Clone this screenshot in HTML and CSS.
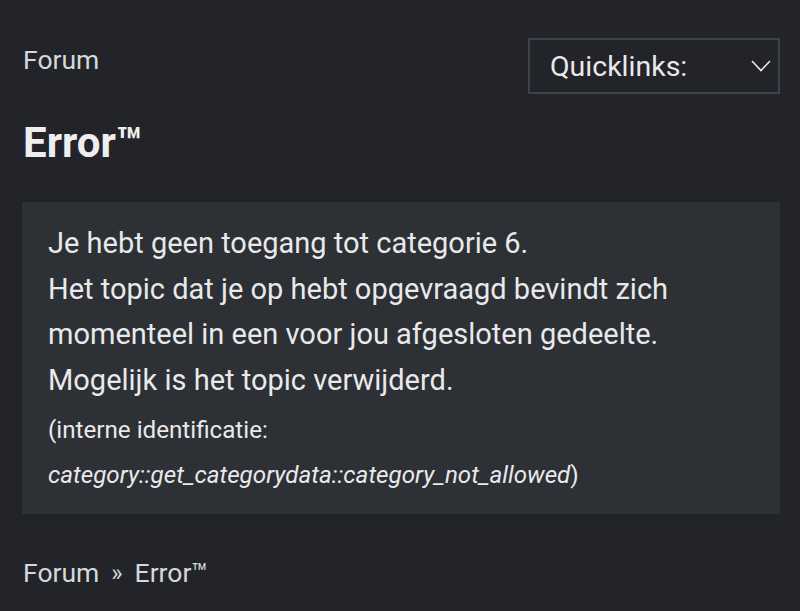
FILE: index.html
```html
<!DOCTYPE html>
<html lang="nl">
<head>
    <meta charset="UTF-8">
    <meta name="viewport" content="width=device-width, initial-scale=1.0">
    <title>Error™</title>
    <link rel="stylesheet" href="styles.css">
</head>
<body>
    <header class="kop">
        <a class="kop_link" href="#">Forum</a>
        <div class="quicklinks">
            <span>Quicklinks:</span>
            <svg class="pijl" width="20" height="12" viewBox="0 0 20 12"><path d="M1 1 L10 10.5 L19 1" fill="none" stroke="#e8e8ea" stroke-width="1.6"/></svg>
        </div>
    </header>

    <h1 class="titel">Error™</h1>

    <section class="melding">
        <p>Je hebt geen toegang tot categorie 6.</p>
        <p>Het topic dat je op hebt opgevraagd bevindt zich momenteel in een voor jou afgesloten gedeelte.</p>
        <p>Mogelijk is het topic verwijderd.</p>
        <p class="klein">(interne identificatie: <em>category::get_categorydata::category_not_allowed</em>)</p>
    </section>

    <nav class="kruimel">
        <a href="#">Forum</a>
        <span class="scheiding">»</span>
        <a href="#">Error™</a>
    </nav>
</body>
</html>
```

FILE: styles.css
```css
*{
    margin: 0;
    padding: 0;
    box-sizing: border-box;
}
body{
    width: 800px;
    height: 611px;
    background-color: rgb(34, 36, 41);
    color: rgb(233, 233, 235);
    font-family: Roboto, "Noto Sans", sans-serif;
    padding: 0 20px 0 22px;
    overflow: hidden;
}
a{
    color: inherit;
    text-decoration: none;
}
.kop{
    display: flex;
    justify-content: space-between;
    align-items: flex-start;
    padding-top: 38px;
}
.kop_link{
    font-size: 26.5px;
    line-height: 38px;
    margin-top: 3px;
    color: rgb(214, 216, 220);
    padding-left: 1px;
}
.quicklinks{
    width: 252px;
    height: 56px;
    border: 2px solid rgb(62, 65, 71);
    display: flex;
    justify-content: space-between;
    align-items: center;
    padding: 0 7px 0 20px;
    font-size: 28.5px;
}
.pijl{
    margin-bottom: 1px;
}
.titel{
    font-size: 42px;
    font-weight: 700;
    line-height: 50px;
    margin-top: 24px;
    margin-left: 1px;
    color: rgb(238, 238, 240);
}
.melding{
    margin-top: 34px;
    background-color: rgb(45, 48, 53);
    padding: 19px 26px 16px;
    font-size: 29px;
    line-height: 45.5px;
}
.melding .klein{
    font-size: 24.2px;
    line-height: 45px;
    margin-top: 5px;
}
.kruimel{
    margin-top: 40px;
    font-size: 26.5px;
    line-height: 38px;
    display: flex;
    gap: 12px;
    color: rgb(214, 216, 220);
    padding-left: 1px;
}
.scheiding{
    font-size: 24px;
}
```
